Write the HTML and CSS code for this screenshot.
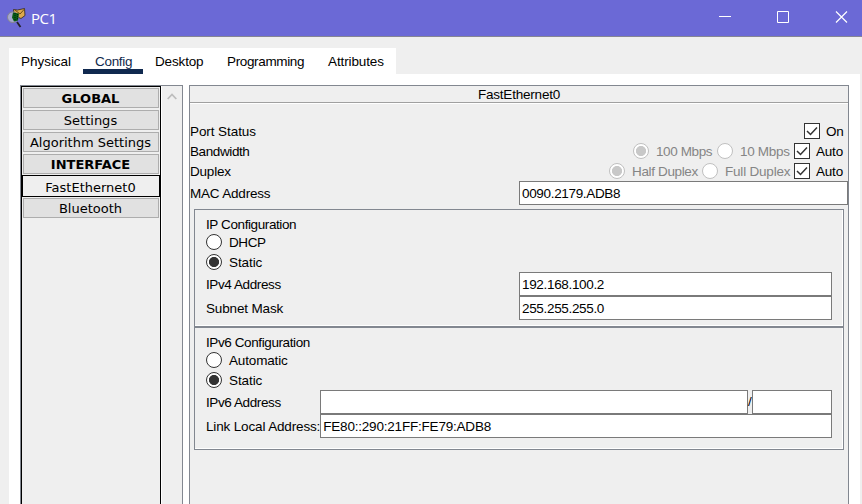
FILE: index.html
```html
<!DOCTYPE html>
<html lang="en">
<head>
<meta charset="utf-8">
<title>PC1</title>
<link rel="stylesheet" href="styles.css">
</head>
<body>
<header class="titlebar">
  <svg class="app-icon" width="20" height="20" viewBox="0 0 20 20">
    <path d="M6.500 1.500l4 .5L17.500.5l.5 7-4 3-7-3z" fill="#dda94c" stroke="#30251a" stroke-width=".8"/>
    <path d="M8 2l5 4 4.500-5" fill="none" stroke="#6b4b18"/>
    <circle cx="5.800" cy="9.200" r="5.300" fill="#a6a8d0" stroke="#85858f"/>
    <path d="M6 4.500l6 1-1 7-4 1-2-4z" fill="#075a16"/>
    <path d="M8 5v7M10.500 6v5" stroke="#03230a" stroke-dasharray="1 1"/>
    <path d="M10 14l3.500 5" stroke="#242027" stroke-width="1.800"/>
  </svg>
  <span class="title">PC1</span>
  <svg class="controls" width="130" height="14" viewBox="0 0 130 14" fill="none" stroke="#fff">
    <path d="M0 6.500h12M58.500 1.500h11v11h-11z"/>
    <path d="M117 1.500l11 11M128 1.500l-11 11" stroke-width="1.200"/>
  </svg>
</header>
<nav class="tabs">
  <span class="tab physical">Physical</span><span class="tab config active">Config</span><span class="tab desktop">Desktop</span><span class="tab programming">Programming</span><span class="tab attributes">Attributes</span>
</nav>
<main class="content">
  <aside class="side">
    <div class="list">
      <div class="item head">GLOBAL</div>
      <div class="item">Settings</div>
      <div class="item">Algorithm Settings</div>
      <div class="item head">INTERFACE</div>
      <div class="item selected">FastEthernet0</div>
      <div class="item">Bluetooth</div>
    </div>
    <div class="scroll"><svg width="10" height="7" viewBox="0 0 10 7"><path d="M.7 6L5 1.500 9.300 6" fill="none" stroke="#bdbdbd" stroke-width="1.800"/></svg></div>
  </aside>
  <section class="panel">
    <h1 class="panel-title">FastEthernet0</h1>
    <div class="settings">
      <div class="row"><span class="label port">Port Status</span><div class="opts"><i class="check"><svg viewBox="0 0 16 16"><path d="M3 8l3.500 3.500 6.500-7"/></svg></i><span class="on">On</span></div></div>
      <div class="row"><span class="label tight">Bandwidth</span><div class="opts"><i class="radio off dot"></i><span class="dim m100">100 Mbps</span><i class="radio off"></i><span class="dim m10">10 Mbps</span><i class="check"><svg viewBox="0 0 16 16"><path d="M3 8l3.500 3.500 6.500-7"/></svg></i><span class="auto">Auto</span></div></div>
      <div class="row"><span class="label">Duplex</span><div class="opts"><i class="radio off dot"></i><span class="dim half">Half Duplex</span><i class="radio off"></i><span class="dim full">Full Duplex</span><i class="check"><svg viewBox="0 0 16 16"><path d="M3 8l3.500 3.500 6.500-7"/></svg></i><span class="auto">Auto</span></div></div>
      <div class="row mac"><span class="label">MAC Address</span><div class="field mac-field">0090.2179.ADB8</div></div>
    </div>
    <div class="group ipv4">
      <div class="line title-line"><span class="label tight">IP Configuration</span></div>
      <div class="line choice"><i class="radio"></i><span class="label tight">DHCP</span></div>
      <div class="line choice"><i class="radio dot"></i><span class="label port">Static</span></div>
      <div class="line entry"><span class="label tight">IPv4 Address</span><div class="field wide">192.168.100.2</div></div>
      <div class="line entry"><span class="label loose">Subnet Mask</span><div class="field wide">255.255.255.0</div></div>
    </div>
    <div class="group ipv6">
      <div class="line title-line"><span class="label tight">IPv6 Configuration</span></div>
      <div class="line choice"><i class="radio"></i><span class="label loose">Automatic</span></div>
      <div class="line choice"><i class="radio dot"></i><span class="label port">Static</span></div>
      <div class="line entry"><span class="label tight">IPv6 Address</span><div class="field address"></div><span class="slash">/</span><div class="field prefix"></div></div>
      <div class="line entry"><span class="label loose link">Link Local Address:</span><div class="field local">FE80::290:21FF:FE79:ADB8</div></div>
    </div>
  </section>
</main>
</body>
</html>
```
FILE: styles.css
```css
* { box-sizing: border-box; }
body {
  margin: 0;
  height: 504px;
  overflow: hidden;
  display: flex;
  flex-direction: column;
  background: #efefef;
  color: #000;
  font: 13.5px/16px "Liberation Sans", Arial, sans-serif;
  letter-spacing: -.2px;
  white-space: nowrap;
}
.titlebar {
  height: 37px;
  flex: none;
  display: flex;
  align-items: center;
  padding: 0 13px 2px 7px;
  background: #6b69d6;
  border-bottom: 1px solid #858594;
}
.app-icon { margin: 1px 4px 0 0; }
.title { color: #fff; font: 15px/20px "Open Sans", sans-serif; letter-spacing: -.5px; padding-top: 1px; }
.controls { margin-left: auto; }
.tabs {
  width: 387px;
  height: 26px;
  flex: none;
  margin: 11px 0 0 9px;
  padding-left: 12px;
  display: flex;
  background: #fff;
}
.tab { height: 26px; padding-top: 6px; }
.physical { width: 62px; letter-spacing: -.03px; }
.config { width: 60px; padding-left: 12px; margin-right: 12px; color: #10284c; border-bottom: 5px solid #10294f; letter-spacing: -.3px; }
.desktop { width: 72px; letter-spacing: -.15px; }
.programming { width: 101px; letter-spacing: -.35px; }
.attributes { letter-spacing: -.12px; }
.content {
  width: 851px;
  height: 430px;
  flex: none;
  margin-left: 9px;
  padding: 11px 11px 0;
  display: flex;
  gap: 6px;
  background: #fff;
}
.side {
  width: 163px;
  display: flex;
  border: 1px solid #828790;
  border-bottom: 0;
  background: #efefef;
}
.list {
  width: 140px;
  padding: 1px 1px 0;
  border: 1px solid #000;
  border-bottom: 0;
  font: 13px/20px "DejaVu Sans", Verdana, sans-serif;
  letter-spacing: 0;
  text-align: center;
}
.item {
  height: 20px;
  margin-bottom: 2px;
  padding-right: 1px;
  border: 1px solid #adadad;
  background: #e1e1e1;
}
.head { font-weight: bold; }
.selected {
  height: 22px;
  margin: -1px -1px 1px;
  padding-top: 2px;
  border-color: #000;
  background: #efefef;
}
.scroll { flex: 1; border-left: 1px solid #fff; padding: 7px 0 0 5px; line-height: 0; }
.panel {
  width: 660px;
  flex: none;
  border: 1px solid #828790;
  border-bottom: 0;
  background: #efefef;
}
.panel-title {
  height: 18px;
  margin: 0;
  font-size: 13.5px;
  font-weight: normal;
  line-height: 17px;
  text-align: center;
  border-bottom: 1px solid #fff;
  box-shadow: inset 0 -1px #a0a0a0;
}
.settings { padding-top: 17px; }
.row { height: 20px; display: flex; align-items: center; justify-content: space-between; }
.opts { display: flex; align-items: center; }
.label, .on, .auto, .dim { padding-top: 1px; }
.tight { letter-spacing: -.4px; }
.loose { letter-spacing: -.15px; }
.port { letter-spacing: -.08px; }
.check { width: 16px; height: 16px; border: 1px solid #333; background: #fff; }
.check svg { display: block; margin: -1px; width: 16px; height: 16px; fill: none; stroke: #333; stroke-width: 1.5; }
.on { width: 28px; padding-left: 6px; }
.auto { width: 38px; padding-left: 6px; }
.dim { color: #858585; padding-left: 7px; }
.m100 { width: 68px; letter-spacing: -.4px; }
.m10 { width: 61px; letter-spacing: -.3px; }
.half { width: 77px; letter-spacing: -.35px; }
.full { width: 76px; }
.radio {
  width: 16px;
  height: 16px;
  flex: none;
  border: 1px solid #333;
  border-radius: 50%;
  background: #fff;
}
.dot { background: radial-gradient(circle, #333 4.7px, #fff 5.4px); }
.off { border-color: #c0c0c0; }
.off.dot { background: radial-gradient(circle, #c8c8c8 4.7px, #fff 5.4px); }
.mac { height: 24px; }
.field { height: 24px; flex: none; border: 1px solid #7a7a7a; background: #fff; padding: 4px 0 0 2px; letter-spacing: -.33px; }
.mac-field { width: 329px; }
.group {
  width: 650px;
  margin-left: 4px;
  padding-left: 11px;
  border: 1px solid #828790;
  box-shadow: inset -1px -1px #fff;
}
.ipv4 { height: 118px; margin-top: 4px; }
.ipv6 { height: 123px; }
.line { display: flex; align-items: center; }
.title-line { height: 16px; margin-top: 6px; }
.choice { height: 20px; }
.title-line + .choice { height: 20px; }
.title-line + .choice .label { padding-top: 1px; }
.choice .radio { margin-right: 7px; }
.entry { height: 24px; width: 626px; }
.wide { width: 313px; margin-left: auto; }
.address { width: 428px; margin-left: auto; }
.prefix { width: 80px; }
.slash { width: 4px; }
.local { width: 512px; margin-left: auto; letter-spacing: -.2px; }
```
